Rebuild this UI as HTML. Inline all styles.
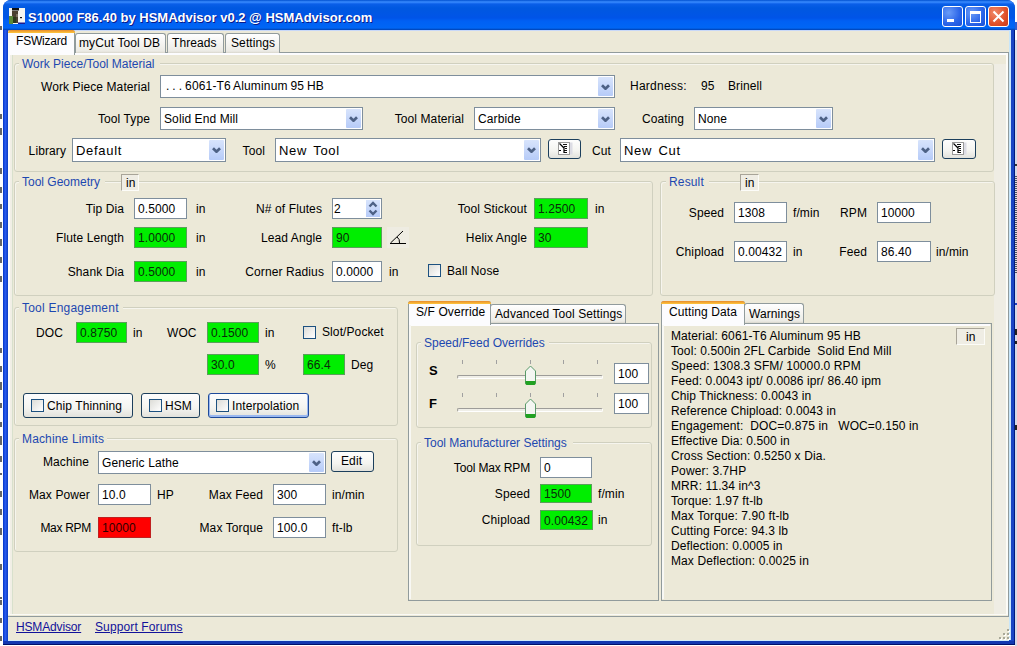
<!DOCTYPE html><html><head><meta charset="utf-8"><style>
html,body{margin:0;padding:0;width:1017px;height:646px;overflow:hidden;background:#fff;position:relative}
.t{position:absolute;font-family:'Liberation Sans', sans-serif;font-size:12px;line-height:14px;white-space:pre;letter-spacing:0.1px}
</style></head><body>
<div style="position:absolute;left:3px;top:0;width:1012px;height:645px;background:#1848d0;border-radius:8px 8px 0 0"></div>
<div style="position:absolute;left:3px;top:30px;width:5px;height:615px;background:linear-gradient(90deg,#0034c8,#2a5cf0 45%,#1a4ad8 75%,#0a3cc0)"></div>
<div style="position:absolute;left:1009px;top:30px;width:2px;height:610px;background:#c8e6fa"></div>
<div style="position:absolute;left:1011px;top:30px;width:3px;height:615px;background:#1a44c4"></div>
<div style="position:absolute;left:1014px;top:30px;width:1px;height:615px;background:#001a80"></div>
<div style="position:absolute;left:1015px;top:40px;width:2px;height:606px;background:#d4d8e8"></div>
<div style="position:absolute;left:8px;top:640px;width:1001px;height:1px;background:#d0ecfa"></div>
<div style="position:absolute;left:3px;top:641px;width:1011px;height:3px;background:#1238b0"></div>
<div style="position:absolute;left:3px;top:644px;width:1012px;height:1px;background:#00106a"></div>
<div style="position:absolute;left:3px;top:0;width:1012px;height:30px;border-radius:8px 8px 0 0;background:linear-gradient(#0050d0 0px,#3a8cff 2px,#0a5ee8 4px,#0058e0 8px,#0054e8 18px,#0060f4 21px,#0066f5 28px,#0040b0 30px)"></div>
<div style="position:absolute;left:8px;top:30px;width:1001px;height:610px;background:#ece9d8"></div>
<div style="position:absolute;left:8px;top:30px;width:1001px;height:1px;background:#c8d8f8"></div>
<svg style="position:absolute;left:9px;top:8px" width="16" height="16"><rect width="16" height="16" fill="#f4f4f0"/><rect x="3" y="0" width="7" height="2.5" fill="#111"/><rect x="3" y="3" width="6" height="12" fill="#4a4030"/><rect x="0" y="8" width="4" height="8" fill="#5a8a3a"/><rect x="4" y="9" width="3" height="6" fill="#2a3a1a"/><rect x="7" y="6" width="2" height="3" fill="#7a7060"/><rect x="11" y="9" width="2" height="1.2" fill="#111"/><rect x="9" y="14.5" width="7" height="1.5" fill="#1a1a90"/></svg>
<div style="position:absolute;left:28px;top:10px;font-family:'Liberation Sans', sans-serif;font-size:13px;font-weight:bold;color:#fff;line-height:16px;white-space:pre;text-shadow:1px 1px 0 #0a1a8a">S10000 F86.40 by HSMAdvisor v0.2 @ HSMAdvisor.com</div>
<div style="position:absolute;left:942px;top:6px;width:19px;height:19px;border:1px solid #fff;border-radius:3px;background:radial-gradient(circle at 30% 30%,#6a9cf8,#2a64e8 60%,#1a50d8)"></div>
<div style="position:absolute;left:965px;top:6px;width:19px;height:19px;border:1px solid #fff;border-radius:3px;background:radial-gradient(circle at 30% 30%,#6a9cf8,#2a64e8 60%,#1a50d8)"></div>
<div style="position:absolute;left:988px;top:6px;width:19px;height:19px;border:1px solid #fff;border-radius:3px;background:radial-gradient(circle at 30% 30%,#f08a6a,#e0502a 60%,#c83a1a)"></div>
<div style="position:absolute;left:947px;top:19px;width:7px;height:3px;background:#fff"></div>
<div style="position:absolute;left:970px;top:11px;width:9px;height:8px;border:1px solid #fff;border-top:3px solid #fff"></div>
<svg style="position:absolute;left:992px;top:10px" width="13" height="13"><path d="M1.5 1.5 L11.5 11.5 M11.5 1.5 L1.5 11.5" stroke="#fff" stroke-width="2"/></svg>
<div style="position:absolute;left:8px;top:52px;width:1000px;height:563px;border:1px solid #919b9c;border-left:none;background:#ece9d8"></div>
<div style="position:absolute;left:8px;top:53px;width:998px;height:2px;background:#fcfcfe"></div>
<div style="position:absolute;left:8px;top:53px;width:2px;height:562px;background:#fcfcfe"></div>
<div style="position:absolute;left:10px;top:55px;width:3px;height:560px;background:#f1efe6"></div>
<div style="position:absolute;left:12px;top:55px;width:1px;height:560px;background:#d8e0cc"></div>
<div style="position:absolute;left:1006px;top:53px;width:2px;height:562px;background:#fcfcf8"></div>
<div style="position:absolute;left:994px;top:64px;width:12px;height:551px;background:#efede4"></div>
<div style="position:absolute;left:8px;top:614px;width:1000px;height:1px;background:#fafaf6"></div>
<div style="position:absolute;left:75px;top:33px;width:89px;height:19px;border:1px solid #919b9c;border-bottom:none;border-radius:3px 3px 0 0;background:linear-gradient(#fff,#ecebe5 90%,#d8d6cc)"></div>
<div class="t" style="left:79px;top:36px;color:#000;">myCut Tool DB</div>
<div style="position:absolute;left:167px;top:33px;width:55px;height:19px;border:1px solid #919b9c;border-bottom:none;border-radius:3px 3px 0 0;background:linear-gradient(#fff,#ecebe5 90%,#d8d6cc)"></div>
<div class="t" style="left:172px;top:36px;color:#000;">Threads</div>
<div style="position:absolute;left:225px;top:33px;width:53px;height:19px;border:1px solid #919b9c;border-bottom:none;border-radius:3px 3px 0 0;background:linear-gradient(#fff,#ecebe5 90%,#d8d6cc)"></div>
<div class="t" style="left:231px;top:36px;color:#000;">Settings</div>
<div style="position:absolute;left:8px;top:30px;width:66px;height:24px;border:1px solid #919b9c;border-bottom:none;border-left:none;border-radius:0 3px 0 0;background:#fcfcfe"></div>
<div style="position:absolute;left:8px;top:30px;width:67px;height:3px;background:linear-gradient(#e68b2c,#ffc73c);border-radius:3px 3px 0 0"></div>
<div class="t" style="left:16px;top:34px;color:#000;letter-spacing:-0.2px">FSWizard</div>
<div style="position:absolute;left:14px;top:63px;width:978px;height:107px;border:1px solid #d0d0bf;border-radius:3px;box-shadow:inset 1px 1px 0 #f6f5ee"></div>
<div style="position:absolute;left:19px;top:60px;width:141px;height:6px;background:#ece9d8"></div>
<div class="t" style="left:22px;top:57px;color:#1d48b0;letter-spacing:0px">Work Piece/Tool Material</div>
<div class="t" style="left:-150px;top:80px;width:300px;text-align:right;color:#000;">Work Piece Material</div>
<div style="position:absolute;left:160px;top:75px;width:453px;height:21px;background:#fff;border:1px solid #7e8e9c;"></div>
<div style="position:absolute;left:598px;top:77px;width:15px;height:19px;background:linear-gradient(#d8e4fc,#b6cbf8);border-radius:1px"></div>
<svg style="position:absolute;left:601.0px;top:83.5px" width="9" height="6"><path d="M1 1.2 L4.5 4.7 L8 1.2" stroke="#4d6185" stroke-width="2.7" fill="none"/></svg>
<div class="t" style="left:164px;top:80.0px;color:#000;"></div>
<div class="t" style="left:166px;top:79px;color:#000;letter-spacing:0.15px;word-spacing:-0.6px">. . . 6061-T6 Aluminum 95 HB</div>
<div class="t" style="left:630px;top:79px;color:#000;letter-spacing:0.25px">Hardness:</div>
<div class="t" style="left:701px;top:79px;color:#000;">95</div>
<div class="t" style="left:728px;top:79px;color:#000;">Brinell</div>
<div class="t" style="left:-150px;top:112px;width:300px;text-align:right;color:#000;">Tool Type</div>
<div style="position:absolute;left:160px;top:107px;width:201px;height:21px;background:#fff;border:1px solid #7e8e9c;"></div>
<div style="position:absolute;left:346px;top:109px;width:15px;height:19px;background:linear-gradient(#d8e4fc,#b6cbf8);border-radius:1px"></div>
<svg style="position:absolute;left:349.0px;top:115.5px" width="9" height="6"><path d="M1 1.2 L4.5 4.7 L8 1.2" stroke="#4d6185" stroke-width="2.7" fill="none"/></svg>
<div class="t" style="left:164px;top:112.0px;color:#000;">Solid End Mill</div>
<div class="t" style="left:164px;top:112px;width:300px;text-align:right;color:#000;">Tool Material</div>
<div style="position:absolute;left:474px;top:107px;width:139px;height:21px;background:#fff;border:1px solid #7e8e9c;"></div>
<div style="position:absolute;left:598px;top:109px;width:15px;height:19px;background:linear-gradient(#d8e4fc,#b6cbf8);border-radius:1px"></div>
<svg style="position:absolute;left:601.0px;top:115.5px" width="9" height="6"><path d="M1 1.2 L4.5 4.7 L8 1.2" stroke="#4d6185" stroke-width="2.7" fill="none"/></svg>
<div class="t" style="left:478px;top:112.0px;color:#000;">Carbide</div>
<div class="t" style="left:384px;top:112px;width:300px;text-align:right;color:#000;">Coating</div>
<div style="position:absolute;left:694px;top:107px;width:137px;height:21px;background:#fff;border:1px solid #7e8e9c;"></div>
<div style="position:absolute;left:816px;top:109px;width:15px;height:19px;background:linear-gradient(#d8e4fc,#b6cbf8);border-radius:1px"></div>
<svg style="position:absolute;left:819.0px;top:115.5px" width="9" height="6"><path d="M1 1.2 L4.5 4.7 L8 1.2" stroke="#4d6185" stroke-width="2.7" fill="none"/></svg>
<div class="t" style="left:698px;top:112.0px;color:#000;">None</div>
<div class="t" style="left:-234px;top:144px;width:300px;text-align:right;color:#000;">Library</div>
<div style="position:absolute;left:72px;top:138px;width:152px;height:22px;background:#fff;border:1px solid #7e8e9c;"></div>
<div style="position:absolute;left:209px;top:140px;width:15px;height:20px;background:linear-gradient(#d8e4fc,#b6cbf8);border-radius:1px"></div>
<svg style="position:absolute;left:212.0px;top:147.0px" width="9" height="6"><path d="M1 1.2 L4.5 4.7 L8 1.2" stroke="#4d6185" stroke-width="2.7" fill="none"/></svg>
<div class="t" style="left:76px;top:143.5px;color:#000;font-size:13px;letter-spacing:0.7px;word-spacing:2px">Default</div>
<div class="t" style="left:-35px;top:144px;width:300px;text-align:right;color:#000;">Tool</div>
<div style="position:absolute;left:275px;top:138px;width:264px;height:22px;background:#fff;border:1px solid #7e8e9c;"></div>
<div style="position:absolute;left:524px;top:140px;width:15px;height:20px;background:linear-gradient(#d8e4fc,#b6cbf8);border-radius:1px"></div>
<svg style="position:absolute;left:527.0px;top:147.0px" width="9" height="6"><path d="M1 1.2 L4.5 4.7 L8 1.2" stroke="#4d6185" stroke-width="2.7" fill="none"/></svg>
<div class="t" style="left:279px;top:143.5px;color:#000;font-size:13px;letter-spacing:0.7px;word-spacing:2px">New Tool</div>
<div style="position:absolute;left:548px;top:139px;width:31px;height:18px;border:1px solid #1c3f5c;border-radius:3px;background:linear-gradient(#fdfdfd,#f4f4f0 60%,#e2e2dc);"></div>
<svg style="position:absolute;left:558px;top:142px" width="16" height="14"><rect x="11.5" y="0.5" width="3" height="12" fill="#dcdce4"/><rect x="0.5" y="0.5" width="11" height="12" fill="#fff" stroke="#9a9a9a"/><path d="M5 2.5h4M6 4.5h3M7 6.5h2M6 8.5h3M6 10.5h3" stroke="#111" stroke-width="1"/><path d="M1.5 1.5 L6 6 M6 4.5 L6 11 M1 8.5 L3 8.5" stroke="#000" stroke-width="1.2"/></svg>
<div class="t" style="left:311px;top:144px;width:300px;text-align:right;color:#000;">Cut</div>
<div style="position:absolute;left:620px;top:138px;width:313px;height:22px;background:#fff;border:1px solid #7e8e9c;"></div>
<div style="position:absolute;left:918px;top:140px;width:15px;height:20px;background:linear-gradient(#d8e4fc,#b6cbf8);border-radius:1px"></div>
<svg style="position:absolute;left:921.0px;top:147.0px" width="9" height="6"><path d="M1 1.2 L4.5 4.7 L8 1.2" stroke="#4d6185" stroke-width="2.7" fill="none"/></svg>
<div class="t" style="left:624px;top:143.5px;color:#000;font-size:13px;letter-spacing:0.7px;word-spacing:2px">New Cut</div>
<div style="position:absolute;left:942px;top:139px;width:32px;height:18px;border:1px solid #1c3f5c;border-radius:3px;background:linear-gradient(#fdfdfd,#f4f4f0 60%,#e2e2dc);"></div>
<svg style="position:absolute;left:952px;top:142px" width="16" height="14"><rect x="11.5" y="0.5" width="3" height="12" fill="#dcdce4"/><rect x="0.5" y="0.5" width="11" height="12" fill="#fff" stroke="#9a9a9a"/><path d="M5 2.5h4M6 4.5h3M7 6.5h2M6 8.5h3M6 10.5h3" stroke="#111" stroke-width="1"/><path d="M1.5 1.5 L6 6 M6 4.5 L6 11 M1 8.5 L3 8.5" stroke="#000" stroke-width="1.2"/></svg>
<div style="position:absolute;left:14px;top:181px;width:637px;height:113px;border:1px solid #d0d0bf;border-radius:3px;box-shadow:inset 1px 1px 0 #f6f5ee"></div>
<div style="position:absolute;left:19px;top:178px;width:86px;height:6px;background:#ece9d8"></div>
<div class="t" style="left:22px;top:175px;color:#1d48b0;letter-spacing:0px">Tool Geometry</div>
<div style="position:absolute;left:121px;top:174px;width:16px;height:15px;border:1px solid #fcfcf8;border-left-color:#a8a498;border-top-color:#a8a498;background:#efede4"></div>
<div class="t" style="left:126px;top:176px;color:#000;">in</div>
<div class="t" style="left:-176px;top:202px;width:300px;text-align:right;color:#000;">Tip Dia</div>
<div style="position:absolute;left:134px;top:198px;width:51px;height:19px;background:#fff;border:1px solid #7e8e9c;"></div>
<div class="t" style="left:138px;top:202.0px;color:#000;">0.5000</div>
<div class="t" style="left:196px;top:202px;color:#000;">in</div>
<div class="t" style="left:-176px;top:231px;width:300px;text-align:right;color:#000;">Flute Length</div>
<div style="position:absolute;left:134px;top:227px;width:51px;height:19px;background:#00ee00;border:1px solid #5aa05a;"></div>
<div class="t" style="left:138px;top:231.0px;color:#0a2a0a;">1.0000</div>
<div class="t" style="left:196px;top:231px;color:#000;">in</div>
<div class="t" style="left:-176px;top:265px;width:300px;text-align:right;color:#000;">Shank Dia</div>
<div style="position:absolute;left:134px;top:261px;width:51px;height:19px;background:#00ee00;border:1px solid #5aa05a;"></div>
<div class="t" style="left:138px;top:265.0px;color:#0a2a0a;">0.5000</div>
<div class="t" style="left:196px;top:265px;color:#000;">in</div>
<div class="t" style="left:22px;top:202px;width:300px;text-align:right;color:#000;">N# of Flutes</div>
<div style="position:absolute;left:332px;top:198px;width:48px;height:19px;background:#fff;border:1px solid #7e8e9c"></div>
<div class="t" style="left:334px;top:202px;color:#000;">2</div>
<div style="position:absolute;left:366px;top:200px;width:14px;height:17px;background:linear-gradient(#d8e4fc,#b6cbf8)"></div>
<svg style="position:absolute;left:368px;top:201px" width="10" height="15"><path d="M1.5 5.5 L5 2 L8.5 5.5 M1.5 9.5 L5 13 L8.5 9.5" stroke="#4d6185" stroke-width="2.4" fill="none"/></svg>
<div class="t" style="left:22px;top:231px;width:300px;text-align:right;color:#000;">Lead Angle</div>
<div style="position:absolute;left:332px;top:227px;width:48px;height:19px;background:#00ee00;border:1px solid #5aa05a;"></div>
<div class="t" style="left:336px;top:231.0px;color:#0a2a0a;">90</div>
<div style="position:absolute;left:387px;top:227px;width:22px;height:21px;background:#eeece2"></div>
<svg style="position:absolute;left:389px;top:229px" width="18" height="16"><path d="M1 14.5 L17 14.5 M1.5 14 L14 2" stroke="#000" stroke-width="1" fill="none"/><path d="M8 8 Q11 10 10.5 14" stroke="#000" stroke-width="1" fill="none"/></svg>
<div class="t" style="left:24px;top:265px;width:300px;text-align:right;color:#000;">Corner Radius</div>
<div style="position:absolute;left:332px;top:261px;width:48px;height:19px;background:#fff;border:1px solid #7e8e9c;"></div>
<div class="t" style="left:336px;top:265.0px;color:#000;">0.0000</div>
<div class="t" style="left:389px;top:265px;color:#000;">in</div>
<div style="position:absolute;left:428px;top:264px;width:11px;height:11px;border:1px solid #1c5180;background:linear-gradient(135deg,#dcdcd7,#fff)"></div>
<div class="t" style="left:447px;top:264px;color:#000;">Ball Nose</div>
<div class="t" style="left:227px;top:202px;width:300px;text-align:right;color:#000;">Tool Stickout</div>
<div style="position:absolute;left:534px;top:198px;width:52px;height:19px;background:#00ee00;border:1px solid #5aa05a;"></div>
<div class="t" style="left:538px;top:202.0px;color:#0a2a0a;">1.2500</div>
<div class="t" style="left:595px;top:202px;color:#000;">in</div>
<div class="t" style="left:227px;top:231px;width:300px;text-align:right;color:#000;">Helix Angle</div>
<div style="position:absolute;left:534px;top:227px;width:52px;height:19px;background:#00ee00;border:1px solid #5aa05a;"></div>
<div class="t" style="left:538px;top:231.0px;color:#0a2a0a;">30</div>
<div style="position:absolute;left:660px;top:181px;width:333px;height:113px;border:1px solid #d0d0bf;border-radius:3px;box-shadow:inset 1px 1px 0 #f6f5ee"></div>
<div style="position:absolute;left:666px;top:178px;width:43px;height:6px;background:#ece9d8"></div>
<div class="t" style="left:669px;top:175px;color:#1d48b0;letter-spacing:0.15px">Result</div>
<div style="position:absolute;left:740px;top:174px;width:17px;height:15px;border:1px solid #fcfcf8;border-left-color:#a8a498;border-top-color:#a8a498;background:#efede4"></div>
<div class="t" style="left:745px;top:176px;color:#000;">in</div>
<div class="t" style="left:424px;top:206px;width:300px;text-align:right;color:#000;">Speed</div>
<div style="position:absolute;left:734px;top:202px;width:51px;height:19px;background:#fff;border:1px solid #7e8e9c;"></div>
<div class="t" style="left:738px;top:206.0px;color:#000;">1308</div>
<div class="t" style="left:793px;top:206px;color:#000;">f/min</div>
<div class="t" style="left:424px;top:245px;width:300px;text-align:right;color:#000;">Chipload</div>
<div style="position:absolute;left:734px;top:241px;width:51px;height:19px;background:#fff;border:1px solid #7e8e9c;"></div>
<div class="t" style="left:738px;top:245.0px;color:#000;">0.00432</div>
<div class="t" style="left:793px;top:245px;color:#000;">in</div>
<div class="t" style="left:567px;top:206px;width:300px;text-align:right;color:#000;">RPM</div>
<div style="position:absolute;left:877px;top:202px;width:52px;height:19px;background:#fff;border:1px solid #7e8e9c;"></div>
<div class="t" style="left:881px;top:206.0px;color:#000;">10000</div>
<div class="t" style="left:567px;top:245px;width:300px;text-align:right;color:#000;">Feed</div>
<div style="position:absolute;left:877px;top:241px;width:52px;height:19px;background:#fff;border:1px solid #7e8e9c;"></div>
<div class="t" style="left:881px;top:245.0px;color:#000;">86.40</div>
<div class="t" style="left:936px;top:245px;color:#000;">in/min</div>
<div style="position:absolute;left:14px;top:307px;width:382px;height:117px;border:1px solid #d0d0bf;border-radius:3px;box-shadow:inset 1px 1px 0 #f6f5ee"></div>
<div style="position:absolute;left:19px;top:304px;width:104px;height:6px;background:#ece9d8"></div>
<div class="t" style="left:22px;top:301px;color:#1d48b0;letter-spacing:0.22px">Tool Engagement</div>
<div class="t" style="left:36px;top:326px;color:#000;">DOC</div>
<div style="position:absolute;left:76px;top:322px;width:49px;height:19px;background:#00ee00;border:1px solid #5aa05a;"></div>
<div class="t" style="left:80px;top:326.0px;color:#0a2a0a;">0.8750</div>
<div class="t" style="left:133px;top:326px;color:#000;">in</div>
<div class="t" style="left:167px;top:326px;color:#000;">WOC</div>
<div style="position:absolute;left:207px;top:322px;width:50px;height:19px;background:#00ee00;border:1px solid #5aa05a;"></div>
<div class="t" style="left:211px;top:326.0px;color:#0a2a0a;">0.1500</div>
<div class="t" style="left:265px;top:326px;color:#000;">in</div>
<div style="position:absolute;left:303px;top:326px;width:11px;height:11px;border:1px solid #1c5180;background:linear-gradient(135deg,#dcdcd7,#fff)"></div>
<div class="t" style="left:322px;top:325px;color:#000;">Slot/Pocket</div>
<div style="position:absolute;left:207px;top:354px;width:50px;height:19px;background:#00ee00;border:1px solid #5aa05a;"></div>
<div class="t" style="left:211px;top:358.0px;color:#0a2a0a;">30.0</div>
<div class="t" style="left:265px;top:358px;color:#000;">%</div>
<div style="position:absolute;left:303px;top:354px;width:40px;height:19px;background:#00ee00;border:1px solid #5aa05a;"></div>
<div class="t" style="left:307px;top:358.0px;color:#0a2a0a;">66.4</div>
<div class="t" style="left:351px;top:358px;color:#000;">Deg</div>
<div style="position:absolute;left:23px;top:393px;width:108px;height:23px;border:1px solid #1c3f5c;border-radius:3px;background:linear-gradient(#fdfdfd,#f4f4f0 60%,#e2e2dc);"></div>
<div style="position:absolute;left:31px;top:399px;width:11px;height:11px;border:1px solid #1c5180;background:linear-gradient(135deg,#dcdcd7,#fff)"></div>
<div class="t" style="left:47px;top:399px;color:#000;">Chip Thinning</div>
<div style="position:absolute;left:141px;top:393px;width:57px;height:23px;border:1px solid #1c3f5c;border-radius:3px;background:linear-gradient(#fdfdfd,#f4f4f0 60%,#e2e2dc);"></div>
<div style="position:absolute;left:149px;top:399px;width:11px;height:11px;border:1px solid #1c5180;background:linear-gradient(135deg,#dcdcd7,#fff)"></div>
<div class="t" style="left:165px;top:399px;color:#000;">HSM</div>
<div style="position:absolute;left:208px;top:393px;width:99px;height:23px;border:1px solid #1c3f5c;border-radius:3px;background:linear-gradient(#fdfdfd,#f4f4f0 60%,#e2e2dc);border-color:#1e4a9a;box-shadow:inset 0 -1px 0 1px #9ab8f0"></div>
<div style="position:absolute;left:216px;top:399px;width:11px;height:11px;border:1px solid #1c5180;background:linear-gradient(135deg,#dcdcd7,#fff)"></div>
<div class="t" style="left:232px;top:399px;color:#000;">Interpolation</div>
<div style="position:absolute;left:14px;top:438px;width:382px;height:112px;border:1px solid #d0d0bf;border-radius:3px;box-shadow:inset 1px 1px 0 #f6f5ee"></div>
<div style="position:absolute;left:19px;top:435px;width:88px;height:6px;background:#ece9d8"></div>
<div class="t" style="left:22px;top:432px;color:#1d48b0;letter-spacing:0.15px">Machine Limits</div>
<div class="t" style="left:-211px;top:455px;width:300px;text-align:right;color:#000;">Machine</div>
<div style="position:absolute;left:98px;top:451px;width:226px;height:21px;background:#fff;border:1px solid #7e8e9c;"></div>
<div style="position:absolute;left:309px;top:453px;width:15px;height:19px;background:linear-gradient(#d8e4fc,#b6cbf8);border-radius:1px"></div>
<svg style="position:absolute;left:312.0px;top:459.5px" width="9" height="6"><path d="M1 1.2 L4.5 4.7 L8 1.2" stroke="#4d6185" stroke-width="2.7" fill="none"/></svg>
<div class="t" style="left:102px;top:456.0px;color:#000;">Generic Lathe</div>
<div style="position:absolute;left:331px;top:451px;width:41px;height:19px;border:1px solid #1c3f5c;border-radius:3px;background:linear-gradient(#fdfdfd,#f4f4f0 60%,#e2e2dc);"></div>
<div class="t" style="left:341px;top:454px;color:#000;">Edit</div>
<div class="t" style="left:29px;top:488px;color:#000;">Max Power</div>
<div style="position:absolute;left:98px;top:484px;width:51px;height:19px;background:#fff;border:1px solid #7e8e9c;"></div>
<div class="t" style="left:102px;top:488.0px;color:#000;">10.0</div>
<div class="t" style="left:157px;top:488px;color:#000;">HP</div>
<div class="t" style="left:-37px;top:488px;width:300px;text-align:right;color:#000;">Max Feed</div>
<div style="position:absolute;left:273px;top:484px;width:51px;height:19px;background:#fff;border:1px solid #7e8e9c;"></div>
<div class="t" style="left:277px;top:488.0px;color:#000;">300</div>
<div class="t" style="left:332px;top:488px;color:#000;">in/min</div>
<div class="t" style="left:-209px;top:521px;width:300px;text-align:right;color:#000;letter-spacing:-0.3px">Max RPM</div>
<div style="position:absolute;left:98px;top:517px;width:51px;height:19px;background:#ff0000;border:1px solid #c02020;"></div>
<div class="t" style="left:102px;top:521.0px;color:#300000;">10000</div>
<div class="t" style="left:-37px;top:521px;width:300px;text-align:right;color:#000;">Max Torque</div>
<div style="position:absolute;left:273px;top:517px;width:51px;height:19px;background:#fff;border:1px solid #7e8e9c;"></div>
<div class="t" style="left:277px;top:521.0px;color:#000;">100.0</div>
<div class="t" style="left:332px;top:521px;color:#000;">ft-lb</div>
<div style="position:absolute;left:408px;top:323px;width:249px;height:276px;border:1px solid #919b9c;background:#ece9d8"></div>
<div style="position:absolute;left:409px;top:324px;width:249px;height:2px;background:#fcfcfe"></div>
<div style="position:absolute;left:409px;top:324px;width:2px;height:275px;background:#f8f8f4"></div>
<div style="position:absolute;left:490px;top:304px;width:134px;height:18px;border:1px solid #919b9c;border-bottom:none;border-radius:3px 3px 0 0;background:linear-gradient(#fff,#ecebe5 90%,#d8d6cc)"></div>
<div class="t" style="left:495px;top:307px;color:#000;">Advanced Tool Settings</div>
<div style="position:absolute;left:408px;top:301px;width:81px;height:23px;border:1px solid #919b9c;border-bottom:none;border-radius:3px 3px 0 0;background:#fcfcfe"></div>
<div style="position:absolute;left:408px;top:301px;width:83px;height:3px;background:linear-gradient(#e68b2c,#ffc73c);border-radius:3px 3px 0 0"></div>
<div class="t" style="left:416px;top:305px;color:#000;">S/F Override</div>
<div style="position:absolute;left:416px;top:342px;width:234px;height:84px;border:1px solid #d0d0bf;border-radius:3px;box-shadow:inset 1px 1px 0 #f6f5ee"></div>
<div style="position:absolute;left:421px;top:339px;width:128px;height:6px;background:#ece9d8"></div>
<div class="t" style="left:424px;top:336px;color:#1d48b0;letter-spacing:0px">Speed/Feed Overrides</div>
<div class="t" style="left:429px;top:364px;color:#000;font-weight:bold;font-size:13px">S</div>
<div style="position:absolute;left:462px;top:360px;width:1px;height:4px;background:#a0a0a0"></div>
<div style="position:absolute;left:496px;top:360px;width:1px;height:4px;background:#a0a0a0"></div>
<div style="position:absolute;left:530px;top:360px;width:1px;height:4px;background:#a0a0a0"></div>
<div style="position:absolute;left:563px;top:360px;width:1px;height:4px;background:#a0a0a0"></div>
<div style="position:absolute;left:597px;top:360px;width:1px;height:4px;background:#a0a0a0"></div>
<div style="position:absolute;left:457px;top:375px;width:144px;height:2px;border:1px solid #9d9c99;border-bottom-color:#fff;border-right-color:#fff;border-radius:2px;background:#f0efe8"></div>
<svg style="position:absolute;left:524px;top:365px" width="13" height="21"><path d="M1.5 6 L6.5 1 L11.5 6 L11.5 18 Q11.5 19.5 10 19.5 L3 19.5 Q1.5 19.5 1.5 18 Z" fill="#f4f6f2" stroke="#5a9a6a"/><path d="M1.5 16 L11.5 16 L11.5 18 Q11.5 20 10 20 L3 20 Q1.5 20 1.5 18 Z" fill="#21a121"/></svg>
<div class="t" style="left:429px;top:397px;color:#000;font-weight:bold;font-size:13px">F</div>
<div style="position:absolute;left:462px;top:393px;width:1px;height:4px;background:#a0a0a0"></div>
<div style="position:absolute;left:496px;top:393px;width:1px;height:4px;background:#a0a0a0"></div>
<div style="position:absolute;left:530px;top:393px;width:1px;height:4px;background:#a0a0a0"></div>
<div style="position:absolute;left:563px;top:393px;width:1px;height:4px;background:#a0a0a0"></div>
<div style="position:absolute;left:597px;top:393px;width:1px;height:4px;background:#a0a0a0"></div>
<div style="position:absolute;left:457px;top:408px;width:144px;height:2px;border:1px solid #9d9c99;border-bottom-color:#fff;border-right-color:#fff;border-radius:2px;background:#f0efe8"></div>
<svg style="position:absolute;left:524px;top:398px" width="13" height="21"><path d="M1.5 6 L6.5 1 L11.5 6 L11.5 18 Q11.5 19.5 10 19.5 L3 19.5 Q1.5 19.5 1.5 18 Z" fill="#f4f6f2" stroke="#5a9a6a"/><path d="M1.5 16 L11.5 16 L11.5 18 Q11.5 20 10 20 L3 20 Q1.5 20 1.5 18 Z" fill="#21a121"/></svg>
<div style="position:absolute;left:614px;top:363px;width:33px;height:19px;background:#fff;border:1px solid #7e8e9c;"></div>
<div class="t" style="left:618px;top:367.0px;color:#000;">100</div>
<div style="position:absolute;left:614px;top:393px;width:33px;height:19px;background:#fff;border:1px solid #7e8e9c;"></div>
<div class="t" style="left:618px;top:397.0px;color:#000;">100</div>
<div style="position:absolute;left:416px;top:442px;width:234px;height:102px;border:1px solid #d0d0bf;border-radius:3px;box-shadow:inset 1px 1px 0 #f6f5ee"></div>
<div style="position:absolute;left:421px;top:439px;width:152px;height:6px;background:#ece9d8"></div>
<div class="t" style="left:424px;top:436px;color:#1d48b0;letter-spacing:0px">Tool Manufacturer Settings</div>
<div class="t" style="left:230px;top:461px;width:300px;text-align:right;color:#000;letter-spacing:-0.15px">Tool Max RPM</div>
<div style="position:absolute;left:540px;top:457px;width:50px;height:19px;background:#fff;border:1px solid #7e8e9c;"></div>
<div class="t" style="left:544px;top:461.0px;color:#000;">0</div>
<div class="t" style="left:230px;top:487px;width:300px;text-align:right;color:#000;">Speed</div>
<div style="position:absolute;left:540px;top:484px;width:50px;height:17px;background:#00ee00;border:1px solid #5aa05a;"></div>
<div class="t" style="left:544px;top:487.0px;color:#0a2a0a;">1500</div>
<div class="t" style="left:598px;top:487px;color:#000;">f/min</div>
<div class="t" style="left:230px;top:513px;width:300px;text-align:right;color:#000;">Chipload</div>
<div style="position:absolute;left:540px;top:510px;width:51px;height:18px;background:#00ee00;border:1px solid #5aa05a;"></div>
<div class="t" style="left:544px;top:513.5px;color:#0a2a0a;">0.00432</div>
<div class="t" style="left:598px;top:513px;color:#000;">in</div>
<div style="position:absolute;left:661px;top:323px;width:329px;height:276px;border:1px solid #919b9c;background:#ece9d8"></div>
<div style="position:absolute;left:662px;top:324px;width:328px;height:2px;background:#fcfcfe"></div>
<div style="position:absolute;left:662px;top:324px;width:2px;height:275px;background:#f8f8f4"></div>
<div style="position:absolute;left:744px;top:303px;width:58px;height:19px;border:1px solid #919b9c;border-bottom:none;border-radius:3px 3px 0 0;background:linear-gradient(#fff,#ecebe5 90%,#d8d6cc)"></div>
<div class="t" style="left:749px;top:307px;color:#000;">Warnings</div>
<div style="position:absolute;left:661px;top:301px;width:82px;height:23px;border:1px solid #919b9c;border-bottom:none;border-radius:3px 3px 0 0;background:#fcfcfe"></div>
<div style="position:absolute;left:661px;top:301px;width:84px;height:3px;background:linear-gradient(#e68b2c,#ffc73c);border-radius:3px 3px 0 0"></div>
<div class="t" style="left:669px;top:305px;color:#000;">Cutting Data</div>
<div style="position:absolute;left:956px;top:328px;width:27px;height:15px;border:1px solid #fcfcf8;border-left-color:#a8a498;border-top-color:#a8a498;background:#efede4"></div>
<div class="t" style="left:961px;top:330px;color:#000;"></div>
<div class="t" style="left:966px;top:330px;color:#000;">in</div>
<div class="t" style="left:671px;top:329px;color:#000;">Material: 6061-T6 Aluminum 95 HB</div>
<div class="t" style="left:671px;top:344px;color:#000;">Tool: 0.500in 2FL Carbide  Solid End Mill</div>
<div class="t" style="left:671px;top:359px;color:#000;">Speed: 1308.3 SFM/ 10000.0 RPM</div>
<div class="t" style="left:671px;top:374px;color:#000;">Feed: 0.0043 ipt/ 0.0086 ipr/ 86.40 ipm</div>
<div class="t" style="left:671px;top:389px;color:#000;">Chip Thickness: 0.0043 in</div>
<div class="t" style="left:671px;top:404px;color:#000;">Reference Chipload: 0.0043 in</div>
<div class="t" style="left:671px;top:419px;color:#000;">Engagement:  DOC=0.875 in   WOC=0.150 in</div>
<div class="t" style="left:671px;top:434px;color:#000;">Effective Dia: 0.500 in</div>
<div class="t" style="left:671px;top:449px;color:#000;">Cross Section: 0.5250 x Dia.</div>
<div class="t" style="left:671px;top:464px;color:#000;">Power: 3.7HP</div>
<div class="t" style="left:671px;top:479px;color:#000;">MRR: 11.34 in^3</div>
<div class="t" style="left:671px;top:494px;color:#000;">Torque: 1.97 ft-lb</div>
<div class="t" style="left:671px;top:509px;color:#000;">Max Torque: 7.90 ft-lb</div>
<div class="t" style="left:671px;top:524px;color:#000;">Cutting Force: 94.3 lb</div>
<div class="t" style="left:671px;top:539px;color:#000;">Deflection: 0.0005 in</div>
<div class="t" style="left:671px;top:554px;color:#000;">Max Deflection: 0.0025 in</div>
<div style="position:absolute;left:1008px;top:630px;width:2px;height:2px;background:#fff"></div>
<div style="position:absolute;left:1007px;top:629px;width:2px;height:2px;background:#a8a898"></div>
<div style="position:absolute;left:1004px;top:634px;width:2px;height:2px;background:#fff"></div>
<div style="position:absolute;left:1003px;top:633px;width:2px;height:2px;background:#a8a898"></div>
<div style="position:absolute;left:1008px;top:634px;width:2px;height:2px;background:#fff"></div>
<div style="position:absolute;left:1007px;top:633px;width:2px;height:2px;background:#a8a898"></div>
<div style="position:absolute;left:1000px;top:638px;width:2px;height:2px;background:#fff"></div>
<div style="position:absolute;left:999px;top:637px;width:2px;height:2px;background:#a8a898"></div>
<div style="position:absolute;left:1004px;top:638px;width:2px;height:2px;background:#fff"></div>
<div style="position:absolute;left:1003px;top:637px;width:2px;height:2px;background:#a8a898"></div>
<div style="position:absolute;left:1008px;top:638px;width:2px;height:2px;background:#fff"></div>
<div style="position:absolute;left:1007px;top:637px;width:2px;height:2px;background:#a8a898"></div>
<div style="position:absolute;left:0px;top:26px;width:2px;height:4px;background:#666"></div>
<div style="position:absolute;left:0px;top:114px;width:2px;height:5px;background:#666"></div>
<div style="position:absolute;left:0px;top:128px;width:2px;height:7px;background:#666"></div>
<div style="position:absolute;left:0px;top:168px;width:2px;height:6px;background:#666"></div>
<div style="position:absolute;left:0px;top:187px;width:2px;height:6px;background:#666"></div>
<div style="position:absolute;left:0px;top:204px;width:2px;height:5px;background:#666"></div>
<div style="position:absolute;left:0px;top:222px;width:2px;height:6px;background:#666"></div>
<div style="position:absolute;left:0px;top:239px;width:2px;height:7px;background:#666"></div>
<div style="position:absolute;left:0px;top:257px;width:2px;height:6px;background:#666"></div>
<div style="position:absolute;left:0px;top:276px;width:2px;height:6px;background:#666"></div>
<div style="position:absolute;left:0px;top:348px;width:2px;height:5px;background:#666"></div>
<div style="position:absolute;left:0px;top:366px;width:2px;height:6px;background:#666"></div>
<div style="position:absolute;left:0px;top:382px;width:2px;height:8px;background:#666"></div>
<div style="position:absolute;left:0px;top:403px;width:2px;height:5px;background:#666"></div>
<div style="position:absolute;left:0px;top:422px;width:2px;height:5px;background:#666"></div>
<div style="position:absolute;left:0px;top:436px;width:2px;height:9px;background:#666"></div>
<div style="position:absolute;left:0px;top:456px;width:2px;height:6px;background:#666"></div>
<div style="position:absolute;left:0px;top:473px;width:2px;height:2px;background:#666"></div>
<div style="position:absolute;left:0px;top:491px;width:2px;height:6px;background:#666"></div>
<div style="position:absolute;left:0px;top:509px;width:2px;height:6px;background:#666"></div>
<div style="position:absolute;left:0px;top:528px;width:2px;height:7px;background:#666"></div>
<div style="position:absolute;left:0px;top:564px;width:2px;height:6px;background:#666"></div>
<div style="position:absolute;left:0px;top:597px;width:2px;height:2px;background:#666"></div>
<div style="position:absolute;left:0px;top:600px;width:2px;height:5px;background:#666"></div>
<div style="position:absolute;left:0px;top:618px;width:2px;height:5px;background:#666"></div>
<div style="position:absolute;left:0px;top:636px;width:2px;height:5px;background:#666"></div>
<div style="position:absolute;left:1015px;top:22px;width:2px;height:8px;background:#3060d0"></div>
<div style="position:absolute;left:1015px;top:176px;width:2px;height:97px;background:repeating-linear-gradient(#505060 0 1px,#d8d8e0 1px 2px)"></div>
<div style="position:absolute;left:1015px;top:164px;width:2px;height:2px;background:#333"></div>
<div style="position:absolute;left:1015px;top:303px;width:2px;height:2px;background:#2040c0"></div>
<div style="position:absolute;left:1015px;top:329px;width:2px;height:6px;background:#222"></div>
<div style="position:absolute;left:1015px;top:341px;width:2px;height:3px;background:#222"></div>
<div style="position:absolute;left:1015px;top:425px;width:2px;height:5px;background:#222"></div>
<div class="t" style="left:16px;top:620px;color:#12129a;text-decoration:underline;letter-spacing:-0.15px">HSMAdvisor</div>
<div class="t" style="left:95px;top:620px;color:#12129a;text-decoration:underline;letter-spacing:0.12px">Support Forums</div>
</body></html>
